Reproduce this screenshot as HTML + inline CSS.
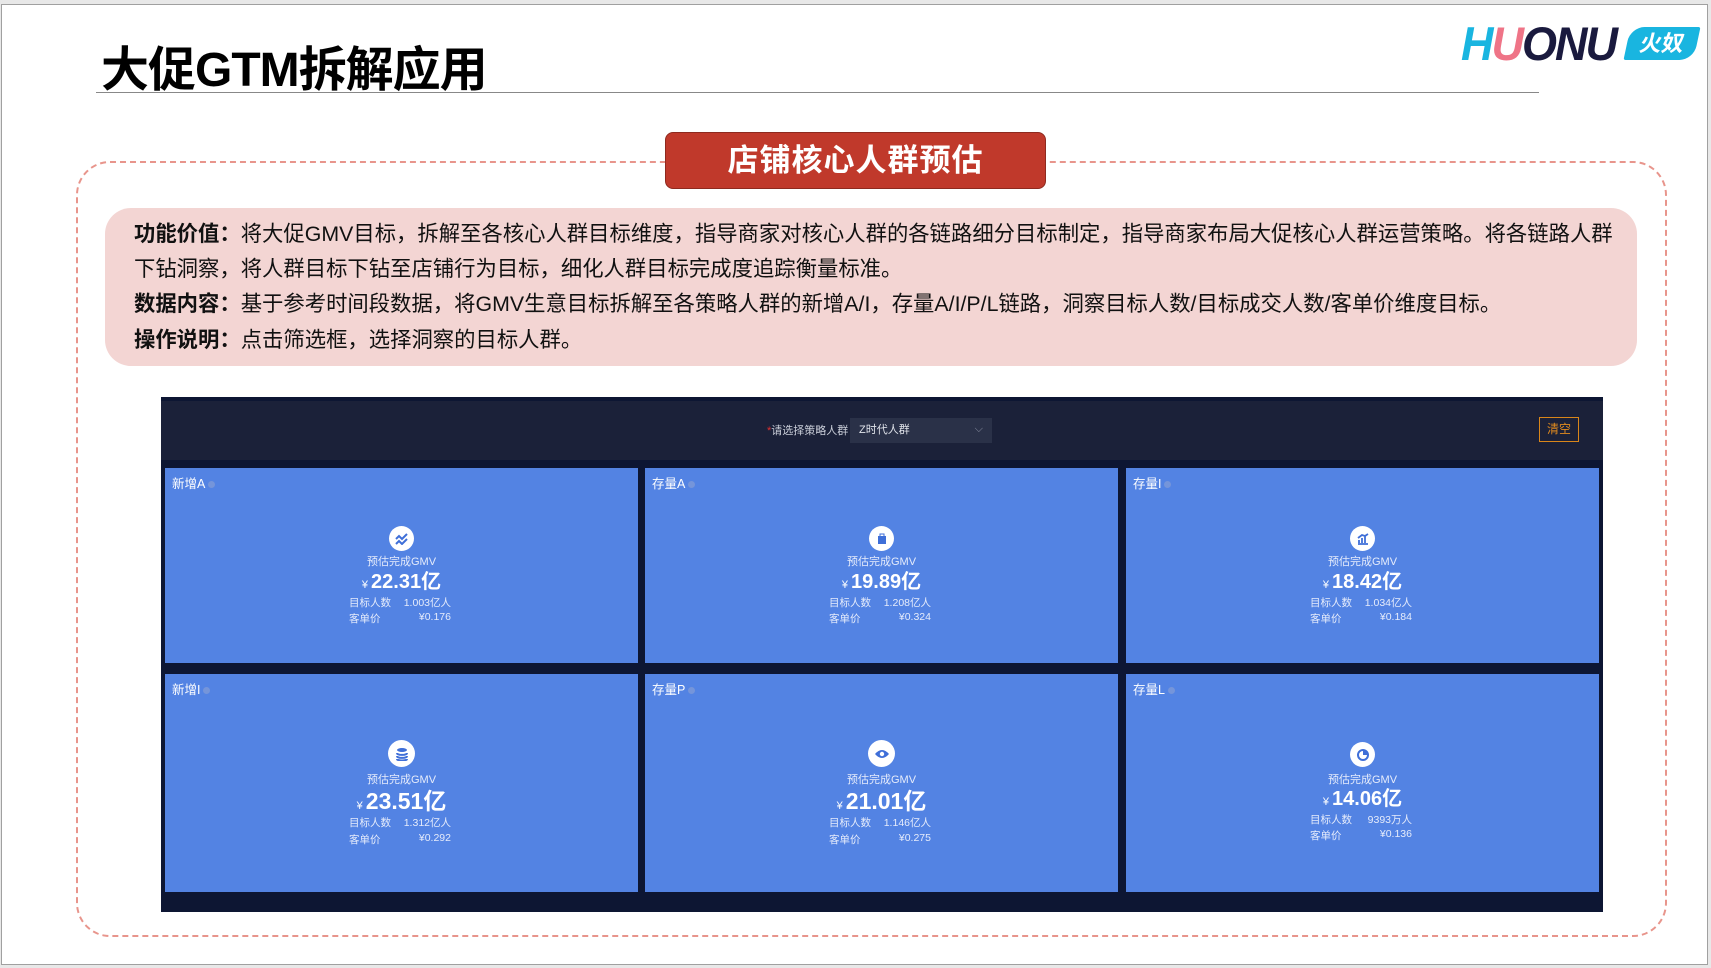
<!DOCTYPE html>
<html><head><meta charset="utf-8"><style>
*{margin:0;padding:0;box-sizing:border-box}
body{width:1711px;height:968px;background:#e8e8e8;position:relative;overflow:hidden;font-family:"Liberation Sans","Noto Sans CJK SC",sans-serif}
.page{position:absolute;left:1px;top:4px;width:1707px;height:961px;background:#fff;border:1px solid #a0a0a0}
.abs{position:absolute}
.title{left:101px;top:30px;font-size:48px;font-weight:bold;color:#000;letter-spacing:-1px;white-space:nowrap}
.rule{left:96px;top:92px;width:1443px;height:1px;background:#888}
.dash{left:76px;top:161px;width:1591px;height:776px;border:2px dashed #e8958c;border-radius:34px}
.btn{left:665px;top:132px;width:381px;height:57px;background:#c0392b;border:1px solid #8e2a1f;border-radius:8px;color:#fff;font-size:31px;font-weight:bold;text-align:center;line-height:55px;letter-spacing:1px}
.pink{left:105px;top:208px;width:1532px;height:158px;background:#f3d5d3;border-radius:26px}
.txt{left:134px;font-size:21.35px;color:#111;white-space:nowrap;line-height:24px}
.txt b{font-weight:bold}
.panel{left:161px;top:397px;width:1442px;height:515px;background:#0d1633}
.hdr{left:161px;top:401px;width:1442px;height:59px;background:#1b2139}
.card{position:absolute;width:473px;background:#5383e3;color:#fff;text-align:center}
.card .t{position:absolute;left:7px;top:5px;font-size:12.5px;text-align:left}
.card .t span{display:inline-block;width:7px;height:7px;border-radius:50%;background:#7595da;margin-left:3px}
.ic{position:absolute;left:224px;width:25px;height:25px;border-radius:50%;background:#fff}
.ic svg{position:absolute;left:50%;top:50%;transform:translate(-50%,-50%)}
.lbl{position:absolute;left:0;width:100%;font-size:11px;color:#e6ecfb}
.val{position:absolute;left:0;width:100%;font-size:20px;font-weight:bold}
.val small{font-size:11px;font-weight:normal;margin-right:3px}
.row{position:absolute;left:184px;width:102px;font-size:10.5px;color:#e6ecfb;text-align:left}
.row span{position:absolute;right:0}
</style></head><body>
<div class="page"></div>
<div class="abs title">大促GTM拆解应用</div>
<div class="abs rule"></div>
<div class="abs" style="left:1461px;top:20px;font-size:45px;font-weight:bold;font-style:italic;letter-spacing:-2px;white-space:nowrap;line-height:48px;transform:scaleY(1.05)"><span style="color:#19b5e0">H</span><span style="color:#ef7487">U</span><span style="color:#1a1a3e">ONU</span></div>
<div class="abs" style="left:1627px;top:27px;width:70px;height:33px;background:#19b5e0;border-radius:14px 2px 14px 2px;transform:skewX(-12deg);color:#fff;font-size:22px;font-weight:bold;text-align:center;line-height:33px">火奴</div>
<div class="abs dash"></div>
<div class="abs btn">店铺核心人群预估</div>
<div class="abs pink"></div>
<div class="abs txt" style="top:222px"><b>功能价值：</b>将大促GMV目标，拆解至各核心人群目标维度，指导商家对核心人群的各链路细分目标制定，指导商家布局大促核心人群运营策略。将各链路人群</div>
<div class="abs txt" style="top:257px">下钻洞察，将人群目标下钻至店铺行为目标，细化人群目标完成度追踪衡量标准。</div>
<div class="abs txt" style="top:292px"><b>数据内容：</b>基于参考时间段数据，将GMV生意目标拆解至各策略人群的新增A/I，存量A/I/P/L链路，洞察目标人数/目标成交人数/客单价维度目标。</div>
<div class="abs txt" style="top:328px"><b>操作说明：</b>点击筛选框，选择洞察的目标人群。</div>

<div class="abs panel"></div>
<div class="abs hdr"></div>
<div class="abs" style="left:767px;top:422px;font-size:11px;color:#c9cdd8;white-space:nowrap"><span style="color:#e03030">*</span>请选择策略人群</div>
<div class="abs" style="left:850px;top:418px;width:142px;height:25px;background:#2a3148;color:#e0e3ea;font-size:11px;line-height:25px;padding-left:9px">Z时代人群<span style="position:absolute;right:9px;top:-1px;color:#8a90a2">⌵</span></div>
<div class="abs" style="left:1539px;top:417px;width:40px;height:25px;border:1px solid #d9861a;color:#e08a1e;font-size:12px;text-align:center;line-height:23px">清空</div>

<div class="card" style="left:165px;top:468px;height:195px"><div class="t">新增A<span></span></div><div class="ic" style="top:58px"><svg width="14" height="12" viewBox="0 0 14 12"><path d="M1 6l3-3 3 3 5-5M1 11l3-3 3 3 5-5" stroke="#3f6fd8" stroke-width="2" fill="none"/></svg></div><div class="lbl" style="top:85px">预估完成GMV</div><div class="val" style="top:97px"><small>¥</small>22.31亿</div><div class="row" style="top:127px">目标人数<span>1.003亿人</span></div><div class="row" style="top:143px">客单价<span>¥0.176</span></div></div>
<div class="card" style="left:645px;top:468px;height:195px"><div class="t">存量A<span></span></div><div class="ic" style="top:58px"><svg width="12" height="12" viewBox="0 0 12 12"><path d="M2 3h8v8H2z" fill="#3f6fd8"/><path d="M4 3V1h4v2" stroke="#3f6fd8" fill="none"/></svg></div><div class="lbl" style="top:85px">预估完成GMV</div><div class="val" style="top:97px"><small>¥</small>19.89亿</div><div class="row" style="top:127px">目标人数<span>1.208亿人</span></div><div class="row" style="top:143px">客单价<span>¥0.324</span></div></div>
<div class="card" style="left:1126px;top:468px;height:195px"><div class="t">存量I<span></span></div><div class="ic" style="top:58px"><svg width="12" height="12" viewBox="0 0 12 12"><path d="M1 11h10M2 10V7M5 10V5M8 10V3M1 5l4-3 3 1 3-2" stroke="#3f6fd8" stroke-width="1.8" fill="none"/></svg></div><div class="lbl" style="top:85px">预估完成GMV</div><div class="val" style="top:97px"><small>¥</small>18.42亿</div><div class="row" style="top:127px">目标人数<span>1.034亿人</span></div><div class="row" style="top:143px">客单价<span>¥0.184</span></div></div>
<div class="card" style="left:165px;top:674px;height:218px"><div class="t">新增I<span></span></div><div class="ic" style="top:66px;width:27px;height:27px;left:223px"><svg width="14" height="14" viewBox="0 0 14 14"><ellipse cx="7" cy="3" rx="5" ry="2" fill="#3f6fd8"/><path d="M2 6c0 2.5 10 2.5 10 0M2 9c0 2.5 10 2.5 10 0M2 12c0 2 10 2 10 0" stroke="#3f6fd8" stroke-width="2" fill="none"/></svg></div><div class="lbl" style="top:97px">预估完成GMV</div><div class="val" style="top:108px;font-size:23px"><small>¥</small>23.51亿</div><div class="row" style="top:141px">目标人数<span>1.312亿人</span></div><div class="row" style="top:158px">客单价<span>¥0.292</span></div></div>
<div class="card" style="left:645px;top:674px;height:218px"><div class="t">存量P<span></span></div><div class="ic" style="top:66px;width:27px;height:27px;left:223px"><svg width="16" height="10" viewBox="0 0 16 10"><path d="M1 5Q8-3 15 5Q8 13 1 5z" fill="#3f6fd8"/><circle cx="8" cy="5" r="2.2" fill="#fff"/></svg></div><div class="lbl" style="top:97px">预估完成GMV</div><div class="val" style="top:108px;font-size:23px"><small>¥</small>21.01亿</div><div class="row" style="top:141px">目标人数<span>1.146亿人</span></div><div class="row" style="top:158px">客单价<span>¥0.275</span></div></div>
<div class="card" style="left:1126px;top:674px;height:218px"><div class="t">存量L<span></span></div><div class="ic" style="top:68px"><svg width="13" height="13" viewBox="0 0 13 13"><circle cx="6.5" cy="6.5" r="5" stroke="#3f6fd8" stroke-width="2" fill="none"/><path d="M6.5 6.5V1.5A5 5 0 0 1 11.5 6.5z" fill="#3f6fd8"/></svg></div><div class="lbl" style="top:97px">预估完成GMV</div><div class="val" style="top:108px"><small>¥</small>14.06亿</div><div class="row" style="top:138px">目标人数<span>9393万人</span></div><div class="row" style="top:154px">客单价<span>¥0.136</span></div></div>
</body></html>
